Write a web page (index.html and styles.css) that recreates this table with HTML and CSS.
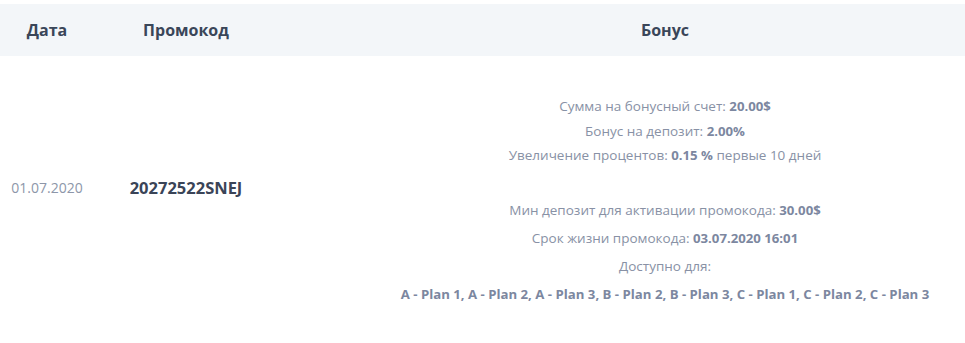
FILE: index.html
```html
<!DOCTYPE html>
<html lang="ru">
<head>
<meta charset="utf-8">
<link rel="stylesheet" href="styles.css">
</head>
<body>
<div class="table">
  <div class="head">
    <div class="c-date">Дата</div>
    <div class="c-code">Промокод</div>
    <div class="c-bonus">Бонус</div>
  </div>
  <div class="row">
    <div class="c-date date">01.07.2020</div>
    <div class="c-code code">20272522SNEJ</div>
    <div class="c-bonus bonus">
      <div class="group g1">
        <div>Сумма на бонусный счет: <b>20.00$</b></div>
        <div>Бонус на депозит: <b>2.00%</b></div>
        <div>Увеличение процентов: <b>0.15 %</b> первые 10 дней</div>
      </div>
      <div class="group g2">
        <div>Мин депозит для активации промокода: <b>30.00$</b></div>
        <div>Срок жизни промокода: <b>03.07.2020 16:01</b></div>
        <div>Доступно для:</div>
        <div><b>A - Plan 1, A - Plan 2, A - Plan 3, B - Plan 2, B - Plan 3, C - Plan 1, C - Plan 2, C - Plan 3</b></div>
      </div>
    </div>
  </div>
</div>
</body>
</html>
```
FILE: styles.css
```css
html, body {
  margin: 0;
  padding: 0;
  background: #ffffff;
}
body {
  padding-top: 4px;
  font-family: "Open Sans", "Noto Sans", sans-serif;
  width: 965px;
}
.table {
  width: 965px;
}
.head, .row {
  display: grid;
  grid-template-columns: 94px 184px 1fr;
}
.head {
  background: #f3f6f9;
  height: 52px;
  align-items: center;
  font-weight: 700;
  font-size: 16px;
  color: #3a4659;
}
.c-date, .c-code, .c-bonus {
  text-align: center;
}
.c-bonus {
  padding-left: 87px;
}
.row {
  align-items: center;
}
.date {
  font-size: 14px;
  color: #8d96a9;
}
.code {
  font-size: 16.5px;
  font-weight: 700;
  color: #3a4457;
}
.bonus {
  padding-top: 38px;
  padding-bottom: 10px;
  font-size: 13.5px;
  color: #8891a5;
}
.bonus b {
  font-weight: 700;
  font-size: 13.2px;
  color: #7c87a0;
}
.g1 { line-height: 24.5px; }
.g2 { line-height: 28px; margin-top: 28.5px; }
```
